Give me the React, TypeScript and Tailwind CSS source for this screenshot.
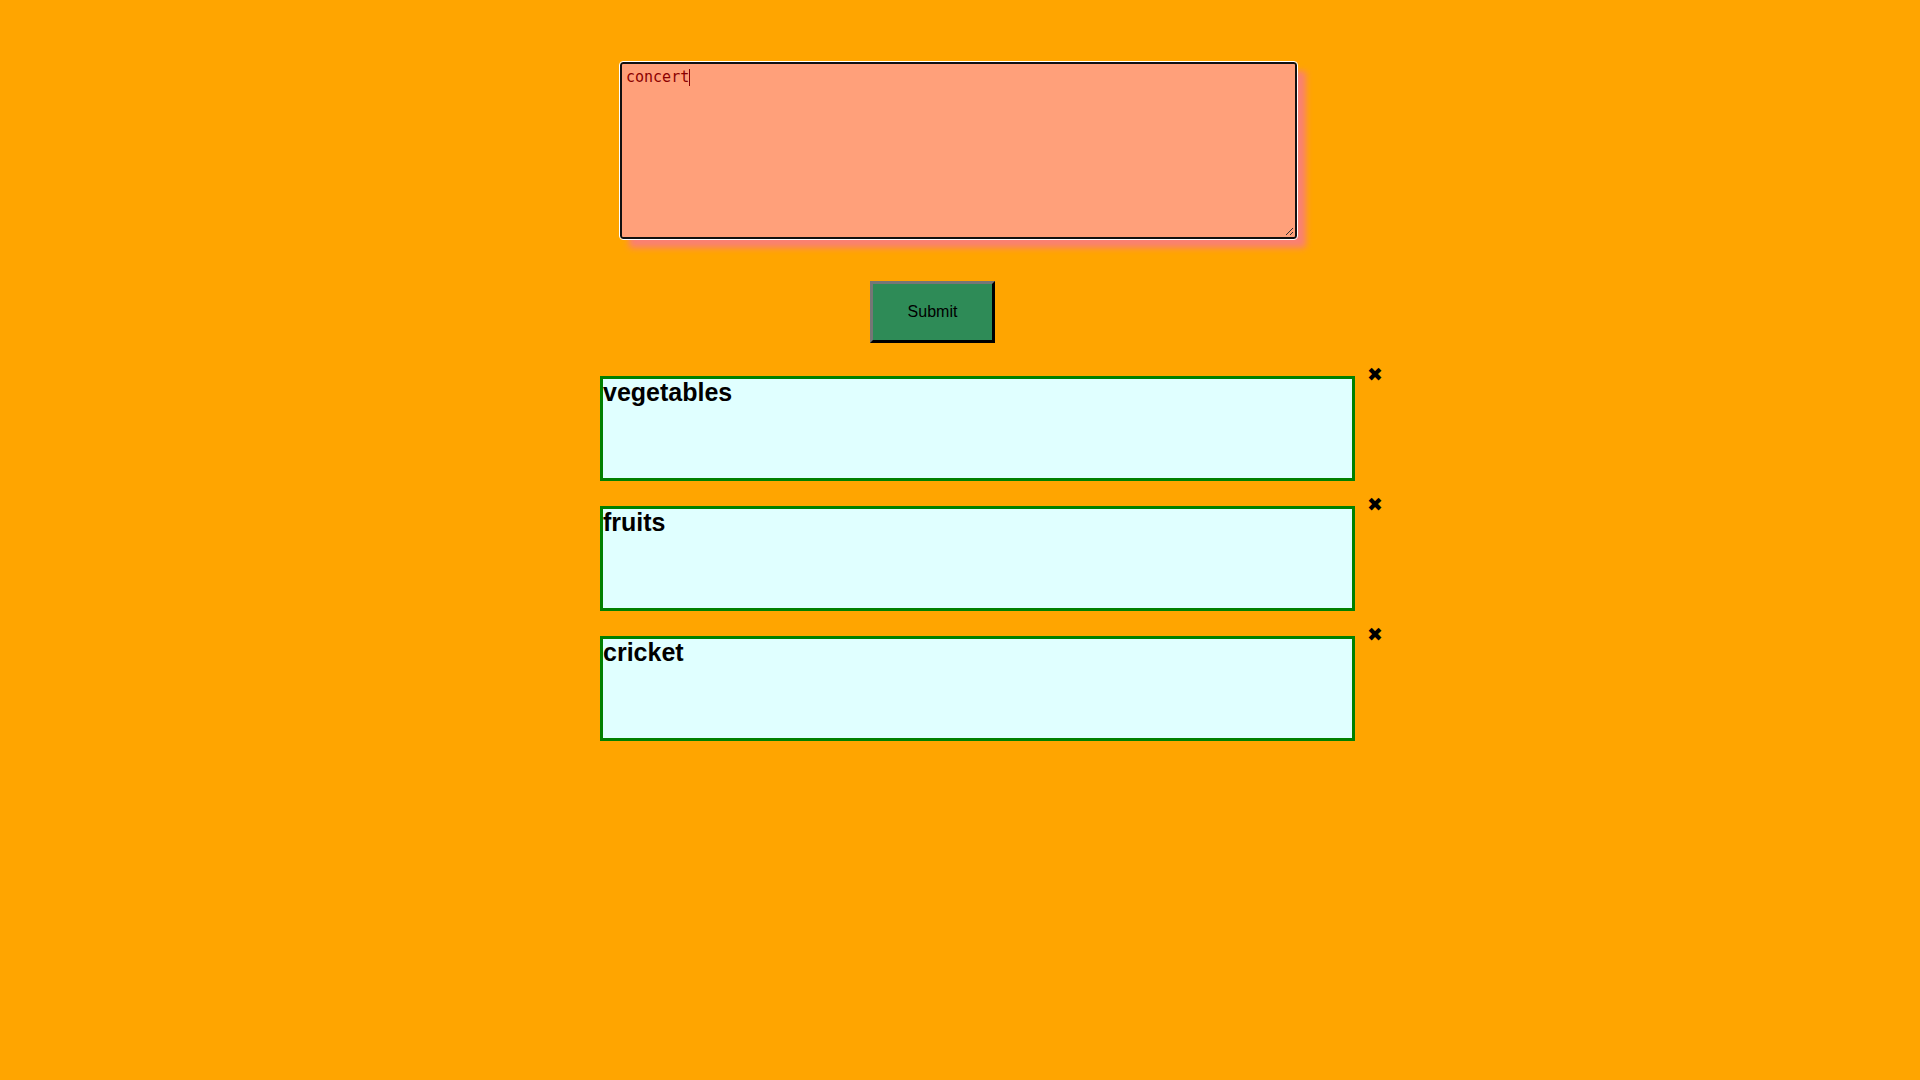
import React from "react";

const items = ["vegetables", "fruits", "cricket"];

export default function App() {
  return (
    <div className="min-h-[1080px] w-[1920px] bg-[#ffa500] pt-[62px]" style={{ fontFamily: '"Liberation Sans", Arial, sans-serif' }}>
      <div className="ml-[620px] h-[177px] w-[677px] rounded-[3px] border-2 border-[#101010] bg-[#ffa07a] shadow-[9px_9px_6px_#fa8072] outline outline-1 outline-white relative">
        <div className="pl-[4px] pt-[3px] text-[15px] font-normal text-[#8b0000] leading-[20px]" style={{ fontFamily: '"DejaVu Sans Mono", monospace' }}>
          concert<span className="inline-block w-px h-[17px] bg-[#8b0000] align-[-4px]" />
        </div>
        <svg className="absolute right-[1px] bottom-[1px]" width="10" height="10" viewBox="0 0 10 10">
          <line x1="9" y1="2" x2="2" y2="9" stroke="#333" strokeWidth="1" />
          <line x1="9" y1="6" x2="6" y2="9" stroke="#333" strokeWidth="1" />
        </svg>
      </div>
      <div className="mt-[42px] ml-[870px]">
        <button className="h-[62px] w-[125px] border-[3px] border-t-[#767676] border-l-[#767676] border-r-[#222] border-b-[#222] bg-[#2e8b57] text-[16px] text-black" style={{ borderStyle: "outset" }}>
          Submit
        </button>
      </div>
      <div className="mt-[33px] flex flex-col gap-[25px]">
        {items.map((t) => (
          <div key={t} className="flex items-start">
            <div className="ml-[600px] h-[105px] w-[755px] border-[3px] border-[#008000] bg-[#e0ffff]">
              <div className="text-[25px] font-bold leading-[26px] text-black">{t}</div>
            </div>
            <span className="ml-[12px] -mt-[15px] text-[19px] leading-[26px] text-black" style={{ fontFamily: '"DejaVu Sans", sans-serif' }}>✖</span>
          </div>
        ))}
      </div>
    </div>
  );
}
